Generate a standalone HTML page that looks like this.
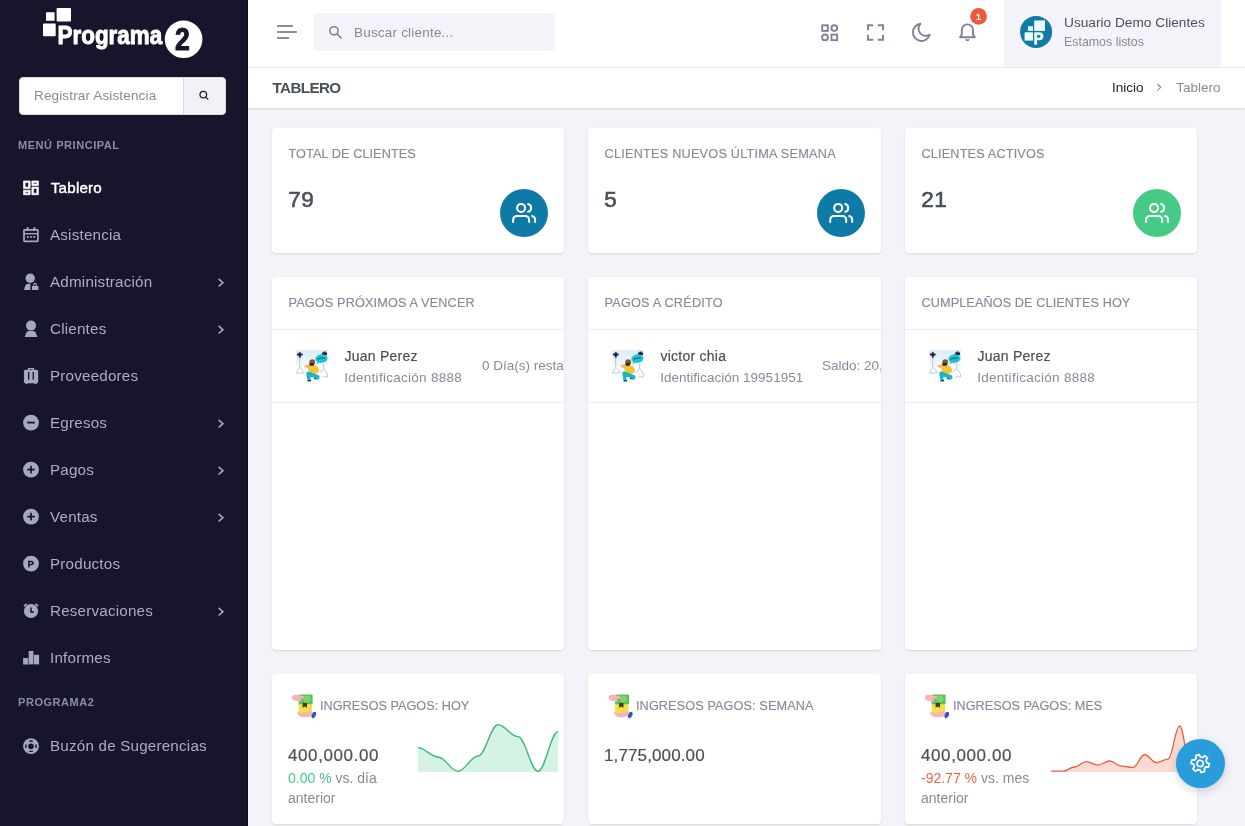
<!DOCTYPE html>
<html lang="es">
<head>
<meta charset="utf-8">
<title>Tablero</title>
<style>
*{box-sizing:border-box;margin:0;padding:0}
html,body{width:1245px;height:826px;overflow:hidden}
body{font-family:"Liberation Sans",sans-serif;background:#f3f3f9;color:#495057;position:relative;font-size:14px}
.abs{position:absolute}
svg{display:block}
#sidebar,#topbar,#titlebar,.card{will-change:transform}

/* SIDEBAR */
#sidebar{position:absolute;left:0;top:0;width:248px;height:826px;background:#17152b;border-right:1px solid #0b0a21}
.sb-search{position:absolute;left:19px;top:77px;width:207px;height:38px;border-radius:4px;overflow:hidden;background:#fff;border:1px solid #d9dbe3}
.sb-search .ph{position:absolute;left:14px;top:0;line-height:36px;font-size:13.5px;letter-spacing:.15px;color:#878a99;white-space:nowrap}
.sb-search .btn{position:absolute;left:163px;top:0;width:43px;height:36px;background:#f1f2f8;border-left:1px solid #d9dbe3}
.sb-title{position:absolute;left:18px;font-size:11px;font-weight:700;letter-spacing:.55px;color:#8b8da6;line-height:12px;white-space:nowrap}
.mi{position:absolute;left:0;width:247px;height:24px}
.mi .ic{position:absolute;left:22px;top:3px;width:18px;height:18px}
.mi .tx{position:absolute;left:50px;top:.4px;line-height:24px;font-size:15.2px;letter-spacing:.2px;color:#abacc4;white-space:nowrap}
.mi.act .tx{color:#fff;-webkit-text-stroke:.4px #fff;letter-spacing:.2px;left:50.8px}
.mi .ch{position:absolute;left:216px;top:7px;width:10px;height:10px}

/* HEADER */
#topbar{position:absolute;left:248px;top:0;width:997px;height:68px;background:#fff;border-bottom:1px solid #e9ebec}
#titlebar{position:absolute;left:248px;top:68px;width:997px;height:39.5px;background:#fff;box-shadow:0 1px 2px rgba(56,65,74,.15)}
.h-search{position:absolute;left:66px;top:13px;width:241px;height:38px;border-radius:4px;background:#f3f3f9}
.h-search .ph{position:absolute;left:40px;top:.5px;line-height:38px;font-size:13.5px;letter-spacing:.2px;color:#878a99;white-space:nowrap}
.userbox{position:absolute;left:756px;top:0;width:217px;height:67px;background:#f3f3f9}
.userbox .nm{position:absolute;left:60px;top:13.5px;line-height:18px;font-size:13.7px;color:#495057;white-space:nowrap}
.userbox .st{position:absolute;left:60px;top:33.5px;line-height:16px;font-size:12.4px;color:#878a99;white-space:nowrap}
.ptitle{position:absolute;left:24.5px;top:0;line-height:39px;font-size:15.2px;letter-spacing:-.62px;font-weight:700;color:#495057;white-space:nowrap}
.bc{position:absolute;top:0;line-height:39px;font-size:13.5px;white-space:nowrap}

/* CARDS */
.card{position:absolute;background:#fff;border-radius:4px;box-shadow:0 1px 2px rgba(56,65,74,.15);overflow:hidden}
.ct{position:absolute;left:16.5px;font-size:12.7px;color:#878a99;white-space:nowrap;line-height:16px;text-transform:uppercase;margin-top:.6px;letter-spacing:.1px;-webkit-text-stroke:.15px #878a99}
.num{position:absolute;left:16.3px;top:58px;font-size:22.5px;line-height:28px;color:#495057;font-weight:400;-webkit-text-stroke:.6px #495057;letter-spacing:.5px;white-space:nowrap}
.circ{position:absolute;left:228px;top:61px;width:48px;height:48px;border-radius:50%}
.hr{position:absolute;left:0;width:100%;height:1px;background:#e9ebec}
.pn{position:absolute;left:72.4px;top:70px;font-size:14px;letter-spacing:.25px;-webkit-text-stroke:.2px #495057;line-height:18px;color:#495057;white-space:nowrap}
.pid{position:absolute;left:72.2px;top:93.2px;font-size:13.5px;letter-spacing:.28px;line-height:16px;color:#878a99;white-space:nowrap}
.pr{position:absolute;top:80.5px;font-size:13.5px;letter-spacing:0;line-height:16px;color:#878a99;white-space:nowrap}
.big{position:absolute;left:16px;top:70.5px;font-size:17px;letter-spacing:.6px;-webkit-text-stroke:.2px #495057;line-height:22px;color:#495057;white-space:nowrap}
.sub{position:absolute;left:16px;top:94px;font-size:14px;line-height:20px;color:#878a99;width:110px}
</style>
</head>
<body>

<div id="sidebar">
  <svg class="abs" style="left:0;top:0;z-index:2" width="248" height="826" viewBox="0 0 248 826">
<g fill="#fff"><rect x="46" y="12.2" width="8.6" height="8.6" rx=".6"/><rect x="56.6" y="8" width="14.4" height="13.6" rx="1"/><rect x="43" y="23.6" width="12.7" height="12.7" rx=".8"/><circle cx="183.6" cy="39.3" r="18.8"/><text x="57.6" y="43.6" font-family="Liberation Sans, sans-serif" font-weight="700" font-size="25.5" textLength="104.5" lengthAdjust="spacingAndGlyphs" stroke="#fff" stroke-width="1" stroke-linejoin="round">Programa</text></g><text x="175" y="50.4" font-family="Liberation Sans, sans-serif" font-weight="700" font-size="30.5" fill="#17152b" stroke="#17152b" stroke-width="1.1" stroke-linejoin="round" textLength="14.8" lengthAdjust="spacingAndGlyphs">2</text>
<g fill="none" stroke="#212529" stroke-width="1.3"><circle cx="203.3" cy="94.6" r="3.3"/><path d="M205.8 97.1 L208.3 99.6"/></g>
<path fill="#fff" stroke="#fff" stroke-width=".8" transform="translate(21 178.6) scale(.8333 .77)" d="M13 21V11h8v10h-8zM3 13V3h8v10H3zm6-2V5H5v6h4zM3 21v-6h8v6H3zm2-2h4v-2H5v2zm10 0h4v-6h-4v6zM13 3h8v6h-8V3zm2 2v2h4V5h-4z"/>
<g fill="none" stroke="#a6a7c0" stroke-width="1.7"><rect x="24" y="229.9" width="13.9" height="11.5" rx=".6"/><path d="M24 233.7H38" stroke-width="1.4"/><path d="M27.6 227.2V231M34.4 227.2V231" stroke-width="2"/></g><g fill="#a6a7c0"><rect x="27" y="236.1" width="1.8" height="1.8"/><rect x="30.1" y="236.1" width="1.8" height="1.8"/><rect x="33.2" y="236.1" width="1.8" height="1.8"/></g>
<g fill="#a6a7c0"><circle cx="30.2" cy="278.3" r="4.7"/><path d="M23.9 289.9 L25.4 285.6 Q26.3 284 28 283.8 L30.4 283.7 L30.4 289.9 Z"/><rect x="31.9" y="285.9" width="6.5" height="4" rx=".5"/><path d="M33.3 286 V284.6 A1.8 1.8 0 0 1 36.9 284.6 V286 H35.9 V284.7 A.8 .8 0 0 0 34.3 284.7 V286 Z"/></g>
<g fill="#a6a7c0"><circle cx="31" cy="325.6" r="5"/><path d="M24.7 336.9 L26.4 332.6 Q27.1 331.1 28.8 331.1 H33.2 Q34.9 331.1 35.6 332.6 L37.4 336.9 Z"/></g>
<g fill="#a6a7c0"><rect x="23.9" y="369.7" width="14.3" height="13.5" rx="1.6"/><rect x="25.4" y="382.6" width="2.2" height="1.3"/><rect x="34.4" y="382.6" width="2.2" height="1.3"/></g><path d="M28.6 370 V368.6 H33.4 V370" fill="none" stroke="#a6a7c0" stroke-width="1.3"/><g fill="#17152b"><rect x="28" y="371.9" width="1.3" height="7.8"/><rect x="32.6" y="371.9" width="1.3" height="7.8"/></g>
<circle cx="31" cy="422.6" r="7.9" fill="#a6a7c0"/><rect x="27.2" y="421.7" width="7.6" height="1.8" fill="#17152b"/>
<circle cx="31" cy="469.6" r="7.9" fill="#a6a7c0"/><rect x="27.2" y="468.75" width="7.6" height="1.7" fill="#17152b"/><rect x="30.15" y="465.8" width="1.7" height="7.6" fill="#17152b"/>
<circle cx="31" cy="516.6" r="7.9" fill="#a6a7c0"/><rect x="27.2" y="515.75" width="7.6" height="1.7" fill="#17152b"/><rect x="30.15" y="512.8000000000001" width="1.7" height="7.6" fill="#17152b"/>
<circle cx="31" cy="563.6" r="7.9" fill="#a6a7c0"/><text x="27.5" y="567.3" font-family="Liberation Sans, sans-serif" font-weight="700" font-size="9.8" fill="#17152b" stroke="#17152b" stroke-width=".3">P</text>
<circle cx="31" cy="611" r="7.1" fill="#a6a7c0"/><path d="M24 606.2 L26.6 603.8 M38 606.2 L35.4 603.8" stroke="#a6a7c0" stroke-width="1.7" fill="none"/><path d="M31 607.6 V612.1 H33.9" fill="none" stroke="#17152b" stroke-width="1.5"/>
<g fill="#a6a7c0"><rect x="23.1" y="658.1" width="5.1" height="6.4"/><rect x="28.7" y="651" width="4.7" height="13.4"/><rect x="33.9" y="654.8" width="5.2" height="9.6"/></g>
<circle cx="31" cy="746.2" r="7.9" fill="#a6a7c0"/><circle cx="31" cy="746.2" r="2.8" fill="#17152b"/><circle cx="31" cy="746.2" r="5.2" fill="none" stroke="#17152b" stroke-width="1.4" pathLength="4" stroke-dasharray=".465 .535" stroke-dashoffset=".2325"/>
<path d="M218.6 278.9 L222.9 282.7 L218.6 286.5" fill="none" stroke="#a6a7c0" stroke-width="1.6"/>
<path d="M218.6 325.9 L222.9 329.7 L218.6 333.5" fill="none" stroke="#a6a7c0" stroke-width="1.6"/>
<path d="M218.6 419.9 L222.9 423.7 L218.6 427.5" fill="none" stroke="#a6a7c0" stroke-width="1.6"/>
<path d="M218.6 466.9 L222.9 470.7 L218.6 474.5" fill="none" stroke="#a6a7c0" stroke-width="1.6"/>
<path d="M218.6 513.9000000000001 L222.9 517.7 L218.6 521.5" fill="none" stroke="#a6a7c0" stroke-width="1.6"/>
<path d="M218.6 607.9000000000001 L222.9 611.7 L218.6 615.5" fill="none" stroke="#a6a7c0" stroke-width="1.6"/>
</svg>
  <!-- SEARCH -->
  <div class="sb-search"><span class="ph">Registrar Asistencia</span><span class="btn"></span></div>
  <div class="sb-title" style="top:139px">MENÚ PRINCIPAL</div>
  <div class="mi act" style="top:175.7px"><span class="tx">Tablero</span></div><div class="mi" style="top:222.7px"><span class="tx">Asistencia</span></div><div class="mi" style="top:269.7px"><span class="tx">Administración</span></div><div class="mi" style="top:316.7px"><span class="tx">Clientes</span></div><div class="mi" style="top:363.7px"><span class="tx">Proveedores</span></div><div class="mi" style="top:410.7px"><span class="tx">Egresos</span></div><div class="mi" style="top:457.7px"><span class="tx">Pagos</span></div><div class="mi" style="top:504.7px"><span class="tx">Ventas</span></div><div class="mi" style="top:551.7px"><span class="tx">Productos</span></div><div class="mi" style="top:598.7px"><span class="tx">Reservaciones</span></div><div class="mi" style="top:645.7px"><span class="tx">Informes</span></div><div class="mi" style="top:733.7px"><span class="tx">Buzón de Sugerencias</span></div>
  <div class="sb-title" style="top:696px">PROGRAMA2</div>
</div>

<div id="topbar">
  <div class="h-search"><span class="ph">Buscar cliente...</span></div>
  <div class="userbox"><span class="nm">Usuario Demo Clientes</span><span class="st">Estamos listos</span></div>
</div>
<div id="titlebar">
  <span class="ptitle">TABLERO</span>
  <span class="bc" style="left:864px;color:#212529">Inicio</span>
  <span class="bc" style="left:928.3px;color:#878a99">Tablero</span>
</div>

<svg class="abs" style="left:0;top:0;z-index:5;pointer-events:none" width="1245" height="826" viewBox="0 0 1245 826">
<g fill="#7e8296"><rect x="277" y="25.1" width="16" height="1.8"/><rect x="277" y="31.1" width="19.8" height="1.8"/><rect x="277" y="37.1" width="12" height="1.8"/></g>
<g fill="none" stroke="#7e8296" stroke-width="1.6"><circle cx="334" cy="30.8" r="4.1"/><path d="M337 33.9 L341.6 38.5"/></g>
<g fill="none" stroke="#7e8296" stroke-width="1.9"><rect x="822.2" y="25.3" width="5.6" height="5.6"/><rect x="831.5" y="34.6" width="5.6" height="5.6"/><circle cx="834.3" cy="28.1" r="2.9"/><circle cx="825" cy="37.4" r="2.9"/></g>
<path fill="none" stroke="#7e8296" stroke-width="1.9" d="M868 30.2V25.3H873.2 M877.8 25.3H883V30.2 M883 34.8V39.7H877.8 M873.2 39.7H868V34.8"/>
<path fill="none" stroke="#7e8296" stroke-width="1.9" stroke-linejoin="round" d="M920.4 23.8 A8.6 8.6 0 1 0 929.8 34.6 A7.2 7.2 0 0 1 920.4 23.8 Z"/>
<path fill="none" stroke="#7e8296" stroke-width="1.9" stroke-linejoin="round" d="M960 37.2 L961.8 34.6 V30 A5.6 5.6 0 0 1 973 30 V34.6 L974.8 37.2 Z"/><path d="M965.3 39.2 H969.5 A2.1 2.1 0 0 1 965.3 39.2 Z" fill="#7e8296"/>
<circle cx="978.6" cy="16.4" r="8.4" fill="#ec5b40"/><text x="978.5" y="19.8" text-anchor="middle" font-family="Liberation Sans, sans-serif" font-weight="700" font-size="9.5" fill="#fff">1</text>
<circle cx="1036.1" cy="31.9" r="16" fill="#0e7ba6"/><g fill="#eafaff"><rect x="1027.9" y="26.2" width="5.1" height="4.7"/><rect x="1034.2" y="20.4" width="10.8" height="10.5"/><rect x="1024.6" y="32.3" width="8.4" height="8.3"/><path d="M1034.2 32.3 H1039.4 A4 4 0 0 1 1039.4 40.3 H1037.1 V44.7 H1034.2 Z M1037.1 35 V37.8 H1039 A1.4 1.4 0 0 0 1039 35 Z" fill-rule="evenodd"/></g>
<path d="M1157.4 84 L1160.7 87.3 L1157.4 90.6" fill="none" stroke="#878a99" stroke-width="1.1"/>
<g transform="translate(512.1 200.9)" fill="none" stroke="#fff" stroke-width="2" stroke-linecap="round" stroke-linejoin="round"><path d="M17 21v-2a4 4 0 0 0-4-4H5a4 4 0 0 0-4 4v2"/><circle cx="9" cy="7" r="4"/><path d="M23 21v-2a4 4 0 0 0-3-3.870"/><path d="M16 3.130a4 4 0 0 1 0 7.750"/></g>
<g transform="translate(829.2 200.9)" fill="none" stroke="#fff" stroke-width="2" stroke-linecap="round" stroke-linejoin="round"><path d="M17 21v-2a4 4 0 0 0-4-4H5a4 4 0 0 0-4 4v2"/><circle cx="9" cy="7" r="4"/><path d="M23 21v-2a4 4 0 0 0-3-3.870"/><path d="M16 3.130a4 4 0 0 1 0 7.750"/></g>
<g transform="translate(1145.1 200.9)" fill="none" stroke="#fff" stroke-width="2" stroke-linecap="round" stroke-linejoin="round"><path d="M17 21v-2a4 4 0 0 0-4-4H5a4 4 0 0 0-4 4v2"/><circle cx="9" cy="7" r="4"/><path d="M23 21v-2a4 4 0 0 0-3-3.870"/><path d="M16 3.130a4 4 0 0 1 0 7.750"/></g>
<g transform="translate(296 350)"><defs><linearGradient id="bg296" x1="0" y1="0" x2="0" y2="1"><stop offset="0" stop-color="#dcecf8"/><stop offset="1" stop-color="#f4f9fd"/></linearGradient></defs><rect x="0" y="0" width="32" height="16" fill="url(#bg296)"/><g stroke="#a3a5ae" stroke-width=".6" fill="none"><path d="M3.7 7V17L.3 23M3.7 17L8.6 22.4M.3 23.3L8.6 22.6"/><path d="M27.6 13.5V18.5L23.6 23M27.6 18.5L31.6 24V26.8H26.5"/></g><path d="M1 3.6H6.6V5.6H4.8V7.4H2.8V5.6H1Z M2.8 2.2H4.8V3.6H2.8Z" fill="#1d2340"/><path d="M26 2.4H31V5H26Z M27.6 1.4H29.6V2.4H27.6Z" fill="#1d2340"/><ellipse cx="25.4" cy="8.6" rx="6.1" ry="4.3" fill="#1cc3d6" transform="rotate(-8 25.4 8.6)"/><path d="M21.5 12 L20 14.6 L23.6 12.6Z" fill="#1cc3d6"/><path d="M21.8 9.2 Q25 7.4 29 8.2" stroke="#12566b" stroke-width="1.1" fill="none"/><path d="M8 16.6 Q10.5 13.5 14 14.6 L14.6 17.4 Q11 19 8 16.6Z" fill="#f5b37a"/><ellipse cx="17.6" cy="19.4" rx="5.6" ry="4.3" fill="#f7c531" transform="rotate(20 17.6 19.4)"/><circle cx="16.2" cy="12.2" r="2.9" fill="#8a5a22"/><rect x="13.6" y="13" width="4.2" height="2.8" rx=".6" fill="#22243a"/><path d="M10.2 23.4 Q10.4 21.4 13 21.6 L18 23.4 L22.6 25.2 Q24.6 27.2 22.6 29.2 L20 30 L17.2 27 L13.8 27.6 L15 30.6 L11.6 30.8 Z" fill="#17b6cc"/><path d="M11.6 30.2 L15 30 L15.2 31.2 L11.4 31.4Z M18.2 27.4 L19.6 28.6 L19 29.2 L17.6 28.2Z" fill="#123040"/></g>
<g transform="translate(612 350)"><defs><linearGradient id="bg612" x1="0" y1="0" x2="0" y2="1"><stop offset="0" stop-color="#dcecf8"/><stop offset="1" stop-color="#f4f9fd"/></linearGradient></defs><rect x="0" y="0" width="32" height="16" fill="url(#bg612)"/><g stroke="#a3a5ae" stroke-width=".6" fill="none"><path d="M3.7 7V17L.3 23M3.7 17L8.6 22.4M.3 23.3L8.6 22.6"/><path d="M27.6 13.5V18.5L23.6 23M27.6 18.5L31.6 24V26.8H26.5"/></g><path d="M1 3.6H6.6V5.6H4.8V7.4H2.8V5.6H1Z M2.8 2.2H4.8V3.6H2.8Z" fill="#1d2340"/><path d="M26 2.4H31V5H26Z M27.6 1.4H29.6V2.4H27.6Z" fill="#1d2340"/><ellipse cx="25.4" cy="8.6" rx="6.1" ry="4.3" fill="#1cc3d6" transform="rotate(-8 25.4 8.6)"/><path d="M21.5 12 L20 14.6 L23.6 12.6Z" fill="#1cc3d6"/><path d="M21.8 9.2 Q25 7.4 29 8.2" stroke="#12566b" stroke-width="1.1" fill="none"/><path d="M8 16.6 Q10.5 13.5 14 14.6 L14.6 17.4 Q11 19 8 16.6Z" fill="#f5b37a"/><ellipse cx="17.6" cy="19.4" rx="5.6" ry="4.3" fill="#f7c531" transform="rotate(20 17.6 19.4)"/><circle cx="16.2" cy="12.2" r="2.9" fill="#8a5a22"/><rect x="13.6" y="13" width="4.2" height="2.8" rx=".6" fill="#22243a"/><path d="M10.2 23.4 Q10.4 21.4 13 21.6 L18 23.4 L22.6 25.2 Q24.6 27.2 22.6 29.2 L20 30 L17.2 27 L13.8 27.6 L15 30.6 L11.6 30.8 Z" fill="#17b6cc"/><path d="M11.6 30.2 L15 30 L15.2 31.2 L11.4 31.4Z M18.2 27.4 L19.6 28.6 L19 29.2 L17.6 28.2Z" fill="#123040"/></g>
<g transform="translate(929 350)"><defs><linearGradient id="bg929" x1="0" y1="0" x2="0" y2="1"><stop offset="0" stop-color="#dcecf8"/><stop offset="1" stop-color="#f4f9fd"/></linearGradient></defs><rect x="0" y="0" width="32" height="16" fill="url(#bg929)"/><g stroke="#a3a5ae" stroke-width=".6" fill="none"><path d="M3.7 7V17L.3 23M3.7 17L8.6 22.4M.3 23.3L8.6 22.6"/><path d="M27.6 13.5V18.5L23.6 23M27.6 18.5L31.6 24V26.8H26.5"/></g><path d="M1 3.6H6.6V5.6H4.8V7.4H2.8V5.6H1Z M2.8 2.2H4.8V3.6H2.8Z" fill="#1d2340"/><path d="M26 2.4H31V5H26Z M27.6 1.4H29.6V2.4H27.6Z" fill="#1d2340"/><ellipse cx="25.4" cy="8.6" rx="6.1" ry="4.3" fill="#1cc3d6" transform="rotate(-8 25.4 8.6)"/><path d="M21.5 12 L20 14.6 L23.6 12.6Z" fill="#1cc3d6"/><path d="M21.8 9.2 Q25 7.4 29 8.2" stroke="#12566b" stroke-width="1.1" fill="none"/><path d="M8 16.6 Q10.5 13.5 14 14.6 L14.6 17.4 Q11 19 8 16.6Z" fill="#f5b37a"/><ellipse cx="17.6" cy="19.4" rx="5.6" ry="4.3" fill="#f7c531" transform="rotate(20 17.6 19.4)"/><circle cx="16.2" cy="12.2" r="2.9" fill="#8a5a22"/><rect x="13.6" y="13" width="4.2" height="2.8" rx=".6" fill="#22243a"/><path d="M10.2 23.4 Q10.4 21.4 13 21.6 L18 23.4 L22.6 25.2 Q24.6 27.2 22.6 29.2 L20 30 L17.2 27 L13.8 27.6 L15 30.6 L11.6 30.8 Z" fill="#17b6cc"/><path d="M11.6 30.2 L15 30 L15.2 31.2 L11.4 31.4Z M18.2 27.4 L19.6 28.6 L19 29.2 L17.6 28.2Z" fill="#123040"/></g>
<g transform="translate(0 0)"><rect x="298.6" y="703" width="13.4" height="10.4" rx="1" fill="#efe146"/><rect x="298.6" y="694.4" width="14" height="9.8" rx="1.2" fill="#58c158"/><ellipse cx="307" cy="699" rx="3.6" ry="3.2" fill="#7fd36b"/><path d="M302.6 703 H307 V707.8 L304.8 706.4 L302.6 707.8Z" fill="#4a3a22"/><path d="M291.8 697.6 Q292.4 694.4 296 694.8 L303.6 696 Q304.8 697.4 303.4 698.6 L299.6 699 L302 700.2 Q301 702 298.4 701.6 L294 700.6 Q291.6 699.8 291.8 697.6Z" fill="#f6b4b6"/><path d="M296.8 711.4 Q299 713 303 713 L309 711.6 Q311.6 710.8 312.6 712 L312.8 715.4 Q307 718 302 717 Q298 716 296.8 711.4Z" fill="#f6b4b6"/><ellipse cx="313.8" cy="715" rx="2" ry="3.4" fill="#3456b6" transform="rotate(24 313.8 715)"/></g>
<g transform="translate(316.5 0)"><rect x="298.6" y="703" width="13.4" height="10.4" rx="1" fill="#efe146"/><rect x="298.6" y="694.4" width="14" height="9.8" rx="1.2" fill="#58c158"/><ellipse cx="307" cy="699" rx="3.6" ry="3.2" fill="#7fd36b"/><path d="M302.6 703 H307 V707.8 L304.8 706.4 L302.6 707.8Z" fill="#4a3a22"/><path d="M291.8 697.6 Q292.4 694.4 296 694.8 L303.6 696 Q304.8 697.4 303.4 698.6 L299.6 699 L302 700.2 Q301 702 298.4 701.6 L294 700.6 Q291.6 699.8 291.8 697.6Z" fill="#f6b4b6"/><path d="M296.8 711.4 Q299 713 303 713 L309 711.6 Q311.6 710.8 312.6 712 L312.8 715.4 Q307 718 302 717 Q298 716 296.8 711.4Z" fill="#f6b4b6"/><ellipse cx="313.8" cy="715" rx="2" ry="3.4" fill="#3456b6" transform="rotate(24 313.8 715)"/></g>
<g transform="translate(633 0)"><rect x="298.6" y="703" width="13.4" height="10.4" rx="1" fill="#efe146"/><rect x="298.6" y="694.4" width="14" height="9.8" rx="1.2" fill="#58c158"/><ellipse cx="307" cy="699" rx="3.6" ry="3.2" fill="#7fd36b"/><path d="M302.6 703 H307 V707.8 L304.8 706.4 L302.6 707.8Z" fill="#4a3a22"/><path d="M291.8 697.6 Q292.4 694.4 296 694.8 L303.6 696 Q304.8 697.4 303.4 698.6 L299.6 699 L302 700.2 Q301 702 298.4 701.6 L294 700.6 Q291.6 699.8 291.8 697.6Z" fill="#f6b4b6"/><path d="M296.8 711.4 Q299 713 303 713 L309 711.6 Q311.6 710.8 312.6 712 L312.8 715.4 Q307 718 302 717 Q298 716 296.8 711.4Z" fill="#f6b4b6"/><ellipse cx="313.8" cy="715" rx="2" ry="3.4" fill="#3456b6" transform="rotate(24 313.8 715)"/></g>
<path d="M418 747.8 C425.4 747.8 430.6 757 438 757 C445.4 757 450.6 771.3 458 771.3 C465.4 771.3 470.6 756 478 756 C485.4 756 490.6 724.8 498 724.8 C505.4 724.8 510.6 736.6 518 736.6 C525.4 736.6 530.6 771.3 538 771.3 C545.4 771.3 550.6 731.8 558 731.8 V772 H418 Z" fill="#d5f3e3"/><path d="M418 747.8 C425.4 747.8 430.6 757 438 757 C445.4 757 450.6 771.3 458 771.3 C465.4 771.3 470.6 756 478 756 C485.4 756 490.6 724.8 498 724.8 C505.4 724.8 510.6 736.6 518 736.6 C525.4 736.6 530.6 771.3 538 771.3 C545.4 771.3 550.6 731.8 558 731.8" fill="none" stroke="#3fba7c" stroke-width="1.4"/>
<path d="M1051.3 771.2 C1055.6 771.2 1058.7 771.2 1063.0 771.2 C1067.3 771.2 1070.3 767 1074.6 767 C1078.9 767 1082.0 761.6 1086.3 761.6 C1090.6 761.6 1093.7 765.1 1098.0 765.1 C1102.3 765.1 1105.3 761 1109.6 761 C1113.9 761 1117.0 766.1 1121.3 766.1 C1125.6 766.1 1128.7 767.4 1133.0 767.4 C1137.3 767.4 1140.3 754.5 1144.6 754.5 C1148.9 754.5 1152.0 762.6 1156.3 762.6 C1160.6 762.6 1163.7 759.1 1168.0 759.1 C1172.3 759.1 1175.3 726 1179.6 726 C1183.9 726 1187.0 771.2 1191.3 771.2 V772 H1051.3 Z" fill="#fbdad3"/><path d="M1051.3 771.2 C1055.6 771.2 1058.7 771.2 1063.0 771.2 C1067.3 771.2 1070.3 767 1074.6 767 C1078.9 767 1082.0 761.6 1086.3 761.6 C1090.6 761.6 1093.7 765.1 1098.0 765.1 C1102.3 765.1 1105.3 761 1109.6 761 C1113.9 761 1117.0 766.1 1121.3 766.1 C1125.6 766.1 1128.7 767.4 1133.0 767.4 C1137.3 767.4 1140.3 754.5 1144.6 754.5 C1148.9 754.5 1152.0 762.6 1156.3 762.6 C1160.6 762.6 1163.7 759.1 1168.0 759.1 C1172.3 759.1 1175.3 726 1179.6 726 C1183.9 726 1187.0 771.2 1191.3 771.2" fill="none" stroke="#ea5f43" stroke-width="1.3"/>
</svg>
<!-- ROW 1 -->
<div class="card" style="left:272px;top:128px;width:292px;height:125px"><span class="ct" style="top:17px;letter-spacing:0.08px">Total de clientes</span><span class="num">79</span><span class="circ" style="background:#0d7ba6"></span></div>
<div class="card" style="left:588px;top:128px;width:293px;height:125px"><span class="ct" style="top:17px;letter-spacing:0.23px">Clientes nuevos última semana</span><span class="num">5</span><span class="circ" style="background:#0d7ba6;left:229px"></span></div>
<div class="card" style="left:905px;top:128px;width:292px;height:125px"><span class="ct" style="top:17px;letter-spacing:0.16px">Clientes activos</span><span class="num">21</span><span class="circ" style="background:#45cb85"></span></div>

<!-- ROW 2 -->
<div class="card" style="left:272px;top:277px;width:292px;height:373px"><span class="ct" style="top:17px;letter-spacing:0.14px">Pagos próximos a vencer</span><div class="hr" style="top:52px"></div><span class="pn">Juan Perez</span><span class="pid">Identificación 8888</span><span class="pr" style="left:210px">0 Día(s) restantes</span><div class="hr" style="top:125px"></div></div>
<div class="card" style="left:588px;top:277px;width:293px;height:373px"><span class="ct" style="top:17px;letter-spacing:0.21px">Pagos a crédito</span><div class="hr" style="top:52px"></div><span class="pn">victor chia</span><span class="pid" style="letter-spacing:.02px">Identificación 19951951</span><span class="pr" style="left:234px">Saldo: 20,000.00</span><div class="hr" style="top:125px"></div></div>
<div class="card" style="left:905px;top:277px;width:292px;height:373px"><span class="ct" style="top:17px;letter-spacing:0.09px">Cumpleaños de clientes hoy</span><div class="hr" style="top:52px"></div><span class="pn">Juan Perez</span><span class="pid">Identificación 8888</span><div class="hr" style="top:125px"></div></div>

<!-- ROW 3 -->
<div class="card" style="left:272px;top:674px;width:292px;height:150px"><span class="ct" style="top:23px;left:48px;letter-spacing:0px">Ingresos pagos: hoy</span><span class="big">400,000.00</span><div class="sub"><span style="color:#45cb85">0.00 %</span> vs. día anterior</div></div>
<div class="card" style="left:588px;top:674px;width:293px;height:150px"><span class="ct" style="top:23px;left:48px;letter-spacing:0.1px">Ingresos pagos: semana</span><span class="big" style="letter-spacing:.12px">1,775,000.00</span></div>
<div class="card" style="left:905px;top:674px;width:292px;height:150px"><span class="ct" style="top:23px;left:48px;letter-spacing:0px">Ingresos pagos: mes</span><span class="big">400,000.00</span><div class="sub"><span style="color:#f06548">-92.77 %</span> vs. mes anterior</div></div>

<!-- FAB -->
<div class="abs" id="fab" style="left:1176px;top:739px;width:49px;height:49px;border-radius:50%;background:#299cdb;z-index:6;box-shadow:0 3px 8px rgba(30,32,37,.18)"></div>

<svg class="abs" style="left:0;top:0;z-index:7" width="1245" height="826" viewBox="0 0 1245 826"><g transform="translate(1200.2 763.5) rotate(12)" fill="none" stroke="#fff" stroke-width="1.7" stroke-linejoin="round"><circle r="3.1"/><path d="M6.34 -2.17 L8.92 -1.81 L8.92 1.81 L6.34 2.17 L5.05 4.40 L6.02 6.82 L2.89 8.63 L1.29 6.57 L-1.29 6.57 L-2.89 8.63 L-6.02 6.82 L-5.05 4.40 L-6.34 2.17 L-8.92 1.81 L-8.92 -1.81 L-6.34 -2.17 L-5.05 -4.40 L-6.02 -6.82 L-2.89 -8.63 L-1.29 -6.57 L1.29 -6.57 L2.89 -8.63 L6.02 -6.82 L5.05 -4.40Z"/></g></svg>
</body>
</html>
